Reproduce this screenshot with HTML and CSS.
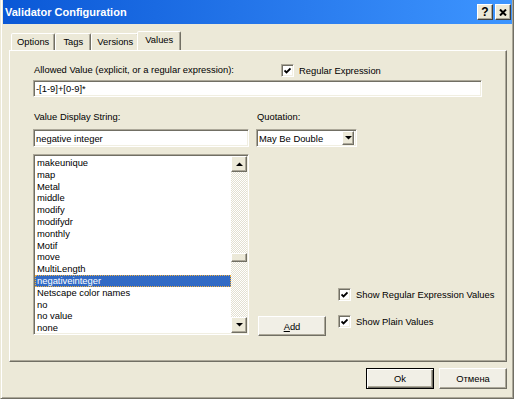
FILE: index.html
```html
<!DOCTYPE html>
<html lang="en">
<head>
  <meta charset="UTF-8">
  <title>Validator Configuration</title>
  <link rel="stylesheet" href="styles.css">
</head>
<body>
  <div class="window">
    <div class="titlebar">
      <span class="title">Validator Configuration</span>
      <span class="caption-btn">?</span>
      <span class="caption-btn">
        <svg width="8" height="7" viewBox="0 0 8 7"><path d="M1 0.5 L7 6.5 M7 0.5 L1 6.5" stroke="#000" stroke-width="2"/></svg>
      </span>
    </div>

    <div class="tabs">
      <span class="tab">Options</span>
      <span class="tab">Tags</span>
      <span class="tab">Versions</span>
      <span class="tab active">Values</span>
    </div>

    <div class="panel">
      <div class="row-top">
        <span class="label allowed">Allowed Value (explicit, or a regular expression):</span>
        <span class="check">
          <span class="box"><svg width="7" height="7" viewBox="0 0 7 7"><path d="M0.5 3.5 L2.5 5.5 L6.5 1.5" fill="none" stroke="#000" stroke-width="1.8"/></svg></span>
          Regular Expression
        </span>
      </div>
      <div class="field field-wide">-[1-9]+[0-9]*</div>

      <div class="cols">
        <div class="left">
          <span class="label">Value Display String:</span>
          <div class="field field-name">negative integer</div>
          <div class="list">
            <div class="list-items">
              <div class="item">makeunique</div>
              <div class="item">map</div>
              <div class="item">Metal</div>
              <div class="item">middle</div>
              <div class="item">modify</div>
              <div class="item">modifydr</div>
              <div class="item">monthly</div>
              <div class="item">Motif</div>
              <div class="item">move</div>
              <div class="item">MultiLength</div>
              <div class="item sel">negativeinteger</div>
              <div class="item">Netscape color names</div>
              <div class="item">no</div>
              <div class="item">no value</div>
              <div class="item">none</div>
            </div>
            <div class="scrollbar">
              <span class="sb-btn"><svg width="7" height="4" viewBox="0 0 7 4"><polygon points="0,4 7,4 3.5,0.5"/></svg></span>
              <div class="sb-track"><div class="sb-thumb"></div></div>
              <span class="sb-btn"><svg width="7" height="4" viewBox="0 0 7 4"><polygon points="0,0 7,0 3.5,3.5"/></svg></span>
            </div>
          </div>
        </div>

        <div class="right">
          <span class="label">Quotation:</span>
          <div class="field combo">
            <span>May Be Double</span>
            <span class="combo-btn"><svg width="7" height="4" viewBox="0 0 7 4"><polygon points="0,0 7,0 3.5,3.5"/></svg></span>
          </div>
          <div class="bottom">
            <span class="btn btn-add"><u>A</u>dd</span>
            <div class="options">
              <span class="check">
                <span class="box"><svg width="7" height="7" viewBox="0 0 7 7"><path d="M0.5 3.5 L2.5 5.5 L6.5 1.5" fill="none" stroke="#000" stroke-width="1.8"/></svg></span>
                Show Regular Expression Values
              </span>
              <span class="check">
                <span class="box"><svg width="7" height="7" viewBox="0 0 7 7"><path d="M0.5 3.5 L2.5 5.5 L6.5 1.5" fill="none" stroke="#000" stroke-width="1.8"/></svg></span>
                Show Plain Values
              </span>
            </div>
          </div>
        </div>
      </div>
    </div>

    <div class="footer">
      <span class="btn default">Ok</span>
      <span class="btn">Отмена</span>
    </div>
  </div>
</body>
</html>
```

FILE: styles.css
```css
* {
  box-sizing: border-box;
}

body {
  margin: 0;
  background: #ece9d8;
  font-family: "Liberation Sans", Arial, sans-serif;
  font-size: 9.4px;
  color: #000;
}

.window {
  width: 514px;
  height: 399px;
  border: 1px solid #716f64;
  border-top: 0;
  border-left-color: #ece9d8;
  box-shadow: inset 1px 0 #fff, inset -1px -1px #aca899;
  padding: 0 1px 2px 2px;
  display: flex;
  flex-direction: column;
}

/* title bar */
.titlebar {
  height: 24px;
  flex: none;
  display: flex;
  align-items: center;
  padding: 0 1px 0 2px;
  background: linear-gradient(90deg, #0a58d6, #2a7cee 60%, #3d95ff);
}

.title {
  flex: 1;
  color: #fff;
  font-weight: bold;
  font-size: 11px;
}

.caption-btn {
  width: 16px;
  height: 16px;
  margin-left: 2px;
  background: #ece9d8;
  border: 1px solid;
  border-color: #fff #404040 #404040 #fff;
  box-shadow: inset -1px -1px #aca899;
  display: flex;
  align-items: center;
  justify-content: center;
  font-weight: bold;
  font-size: 12px;
}

/* tabs */
.tabs {
  display: flex;
  align-items: flex-end;
  height: 19px;
  margin: 7px 0 0 6px;
  padding-left: 2px;
}

.tab {
  height: 17px;
  min-width: 36px;
  padding: 0 5px;
  line-height: 16px;
  text-align: center;
  background: #ece9d8;
  border: 1px solid;
  border-bottom: 0;
  border-color: #fff #716f64 transparent #fff;
  border-radius: 2px 2px 0 0;
  box-shadow: inset -1px 0 #aca899;
}

.tab.active {
  height: 20px;
  margin: 0 -2px -1px;
  padding: 0 7px 3px;
}

.panel {
  height: 312px;
  flex: none;
  margin: 0 5px 0 6px;
  padding: 12px 0 0 23px;
  border: 1px solid;
  border-color: #fff #716f64 #716f64 #fff;
  box-shadow: inset -1px -1px #aca899;
}

.label {
  display: block;
  height: 14px;
  line-height: 14px;
  padding-left: 1px;
  white-space: nowrap;
}

.row-top {
  display: flex;
  align-items: center;
  height: 14px;
}

.label.allowed {
  width: 248px;
  flex: none;
}

.check {
  display: flex;
  align-items: center;
  height: 14px;
  gap: 5px;
  white-space: nowrap;
}

.box {
  width: 13px;
  height: 13px;
  flex: none;
  background: #fff;
  border: 1px solid;
  border-color: #aca899 #fff #fff #aca899;
  box-shadow: inset 1px 1px #716f64, inset -1px -1px #f1efe2;
  display: flex;
  align-items: center;
  justify-content: center;
}

/* sunken edit boxes */
.field {
  background: #fff;
  border: 1px solid;
  border-color: #aca899 #fff #fff #aca899;
  box-shadow: inset 1px 1px #716f64, inset -1px -1px #f1efe2;
  padding: 0 2px;
  display: flex;
  align-items: center;
  white-space: nowrap;
}

.field-wide {
  width: 449px;
  height: 17px;
  margin-top: 3px;
}

.cols {
  display: flex;
  gap: 7px;
  margin-top: 13px;
}

.left {
  width: 216px;
  display: flex;
  flex-direction: column;
}

.field-name {
  height: 18px;
  margin-top: 5px;
}

.list {
  height: 181px;
  margin-top: 7px;
  padding: 1px;
  display: flex;
  background: #fff;
  border: 1px solid;
  border-color: #aca899 #fff #fff #aca899;
  box-shadow: inset 1px 1px #716f64, inset -1px -1px #f1efe2;
}

.list-items {
  flex: 1;
  overflow: hidden;
  padding-top: 1px;
}

.item {
  height: 11.8px;
  line-height: 11.8px;
  padding-left: 2px;
  white-space: nowrap;
}

.item.sel {
  background: #316ac5;
  color: #fff;
  outline: 1px dotted #f0b040;
  outline-offset: -1px;
}

.scrollbar {
  width: 16px;
  display: flex;
  flex-direction: column;
}

.sb-btn,
.sb-thumb,
.combo-btn {
  background: #ece9d8;
  border: 1px solid;
  border-color: #fff #716f64 #716f64 #fff;
  box-shadow: inset -1px -1px #aca899;
}

.sb-btn {
  height: 16px;
  flex: none;
  display: flex;
  align-items: center;
  justify-content: center;
}

.sb-track {
  flex: 1;
  background: repeating-conic-gradient(#fff 0 25%, #e3e0d0 0 50%) 0 0 / 2px 2px;
}

.sb-thumb {
  height: 9px;
  margin-top: 81px;
}

.right {
  flex: 1;
  display: flex;
  flex-direction: column;
}

.combo {
  width: 101px;
  height: 18px;
  margin-top: 5px;
  padding: 0 2px 0 2px;
  justify-content: space-between;
}

.combo-btn {
  width: 12px;
  height: 14px;
  display: flex;
  align-items: center;
  justify-content: center;
}

.bottom {
  margin-top: auto;
  display: flex;
  align-items: flex-end;
}

.options {
  display: flex;
  flex-direction: column;
  gap: 13px;
  margin: 0 0 7px 12px;
}

/* push buttons */
.btn {
  width: 68px;
  height: 21px;
  display: flex;
  align-items: center;
  justify-content: center;
  background: #f1efe6;
  border: 1px solid;
  border-color: #fff #716f64 #716f64 #fff;
  box-shadow: inset -1px -1px #aca899;
}

.btn-add {
  height: 20px;
  margin: 0 0 -1px 2px;
}

.btn.default {
  border: 1px solid #000;
  box-shadow: inset 1px 1px #fff, inset -1px -1px #716f64, inset -2px -2px #aca899;
}

.footer {
  display: flex;
  justify-content: flex-end;
  gap: 5px;
  margin: 6px 5px 0 0;
}
```
